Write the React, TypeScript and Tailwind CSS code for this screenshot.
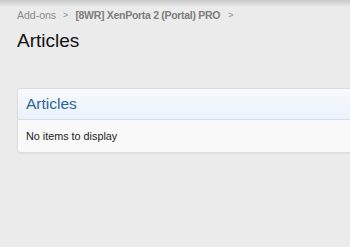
import React from 'react';

const App = () => {
  return (
    <div className="w-[350px] h-[247px] bg-[#ebebeb] overflow-hidden relative" style={{ fontFamily: '"Liberation Sans", Arial, sans-serif' }}>
      {/* top shadow */}
      <div className="absolute top-0 left-0 right-0 h-[7px] bg-gradient-to-b from-[#c9c9c9] to-[#ebebeb]" />

      <div className="pt-[8px] pl-[17px]">
        {/* Breadcrumb */}
        <div className="flex items-center h-[16px] text-[10.5px] text-[#8a8a8a]">
          <span>Add-ons</span>
          <span className="mx-[7px] text-[9px]">&gt;</span>
          <span className="font-bold text-[#7d7d7d] tracking-[-0.3px]">[8WR] XenPorta 2 (Portal) PRO</span>
          <span className="mx-[8px] text-[9px]">&gt;</span>
        </div>

        {/* Page title */}
        <h1 className="mt-[5px] text-[19px] leading-[24px] text-[#111]">Articles</h1>

        {/* Block */}
        <div className="mt-[35px] w-[360px] rounded-[3px] border border-[#dcdcdc] bg-[#f9f9f9] shadow-[0_1px_1px_rgba(0,0,0,0.04)]">
          <div className="h-[31px] flex items-center pl-[8px] border-b border-[#d8dee5] bg-gradient-to-b from-[#f7fafd] to-[#eaf2fb] rounded-t-[3px]">
            <span className="text-[15.5px] text-[#2c6496]">Articles</span>
          </div>
          <div className="h-[32px] flex items-center pl-[8px] text-[10.8px] text-[#222]">
            No items to display
          </div>
        </div>
      </div>
    </div>
  );
};

export default App;
